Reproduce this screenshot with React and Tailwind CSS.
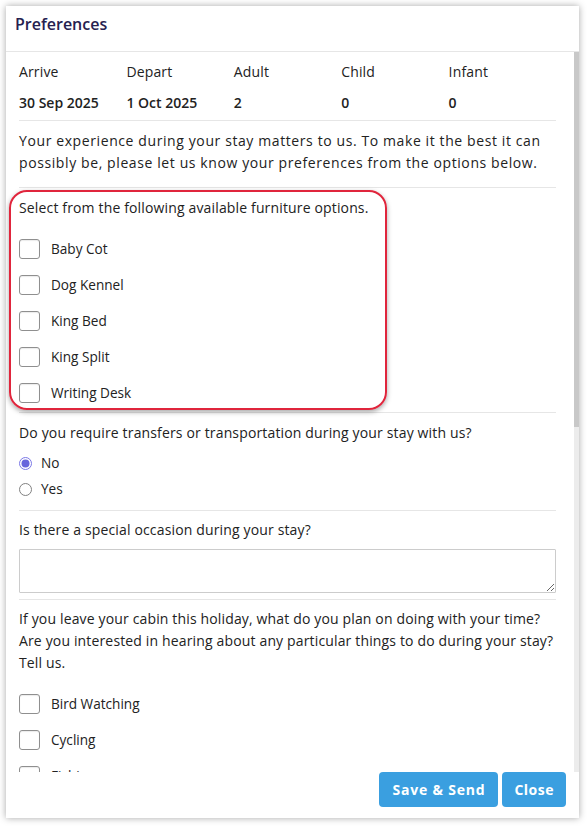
import React from "react";

const furniture = ["Baby Cot", "Dog Kennel", "King Bed", "King Split", "Writing Desk"];
const activities = ["Bird Watching", "Cycling", "Fishing", "Hiking"];

function Checkbox({ label }) {
  return (
    <label className="flex items-center h-5 gap-[11px]">
      <span className="block w-[21px] h-5 rounded-[3px] border border-[#8f8f8f] bg-white shadow-[inset_0_1px_1px_rgba(0,0,0,0.08)]" />
      <span className="text-[13.6px] leading-[22px] text-[#222]">{label}</span>
    </label>
  );
}

function Radio({ label, checked }) {
  return (
    <label className="flex items-center h-[22px] gap-[9px]">
      <svg width="13" height="13" viewBox="0 0 13 13">
        {checked ? (
          <>
            <circle cx="6.5" cy="6.5" r="6" fill="#fff" stroke="#7b78e6" strokeWidth="1" />
            <circle cx="6.5" cy="6.5" r="4" fill="#6865dc" />
          </>
        ) : (
          <circle cx="6.5" cy="6.5" r="6" fill="#fff" stroke="#808080" strokeWidth="1" />
        )}
      </svg>
      <span className="text-[13.6px] leading-[22px] text-[#222]">{label}</span>
    </label>
  );
}

export default function App() {
  return (
    <div className="min-h-[827px] bg-white pt-[6px] pl-[6px] font-['Open_Sans',sans-serif]">
      <div className="w-[573px] h-[812px] bg-white shadow-[0_0_7px_rgba(0,0,0,0.35)] flex flex-col">
        <div className="h-[46px] border-b border-[#e6e6e6] flex items-center pl-[9px] pb-[9px]">
          <h1 className="text-[16px] font-semibold text-[#26214f]">Preferences</h1>
        </div>

        <div className="relative h-[720px] overflow-hidden">
          <div className="pl-[13px] pr-[23px] text-[14px] leading-[22px] text-[#222] tracking-[0.15px]">
            <div className="pt-[9px] pb-[6px] border-b border-[#e6e6e6]">
              <div className="grid grid-cols-5">
                <span>Arrive</span>
                <span>Depart</span>
                <span>Adult</span>
                <span>Child</span>
                <span>Infant</span>
              </div>
              <div className="grid grid-cols-5 mt-[9px] font-semibold tracking-normal">
                <span>30 Sep 2025</span>
                <span>1 Oct 2025</span>
                <span>2</span>
                <span>0</span>
                <span>0</span>
              </div>
            </div>

            <div className="pt-[9px] pb-[13px] border-b border-[#e6e6e6]">
              <p className="tracking-[0.6px]">
                Your experience during your stay matters to us. To make it the best it can
                <br />
                possibly be, please let us know your preferences from the options below.
              </p>
            </div>

            <div className="relative pt-[9px] pb-[9px] border-b border-[#e6e6e6]">
              <p>Select from the following available furniture options.</p>
              <div className="mt-5 flex flex-col gap-4 tracking-normal">
                {furniture.map((f) => (
                  <Checkbox key={f} label={f} />
                ))}
              </div>
              <div className="absolute left-[-10px] top-[2px] w-[378px] h-[220px] rounded-[18px] border-[2.5px] border-[#e0253c] shadow-[0_2px_5px_rgba(0,0,0,0.35)]" />
            </div>

            <div className="pt-[9px] pb-[10px] border-b border-[#e6e6e6]">
              <p>Do you require transfers or transportation during your stay with us?</p>
              <div className="mt-2 flex flex-col gap-1 tracking-normal">
                <Radio label="No" checked />
                <Radio label="Yes" />
              </div>
            </div>

            <div className="pt-[8px] pb-[6px] border-b border-[#e6e6e6]">
              <p>Is there a special occasion during your stay?</p>
              <textarea className="block mt-2 w-full h-[44px] border border-[#cccccc] rounded-[1px] outline-none" />
            </div>

            <div className="pt-[8px]">
              <p>
                If you leave your cabin this holiday, what do you plan on doing with your time?
                <br />
                Are you interested in hearing about any particular things to do during your stay?
                <br />
                Tell us.
              </p>
              <div className="mt-5 flex flex-col gap-4 tracking-normal">
                {activities.map((a) => (
                  <Checkbox key={a} label={a} />
                ))}
              </div>
            </div>
          </div>

          <div className="absolute right-0 top-0 w-[5px] h-full bg-[#ececec]">
            <div className="h-[375px] bg-[#c8c8c8]" />
          </div>
        </div>

        <div className="flex justify-end gap-[4px] pr-[13px]">
          <button className="h-[35px] w-[119px] rounded-[4px] bg-[#3a9fe0] text-white text-[14px] font-bold tracking-[0.8px]">
            Save &amp; Send
          </button>
          <button className="h-[35px] px-[12px] rounded-[4px] bg-[#3a9fe0] text-white text-[14px] font-bold tracking-[0.5px]">
            Close
          </button>
        </div>
      </div>
    </div>
  );
}
